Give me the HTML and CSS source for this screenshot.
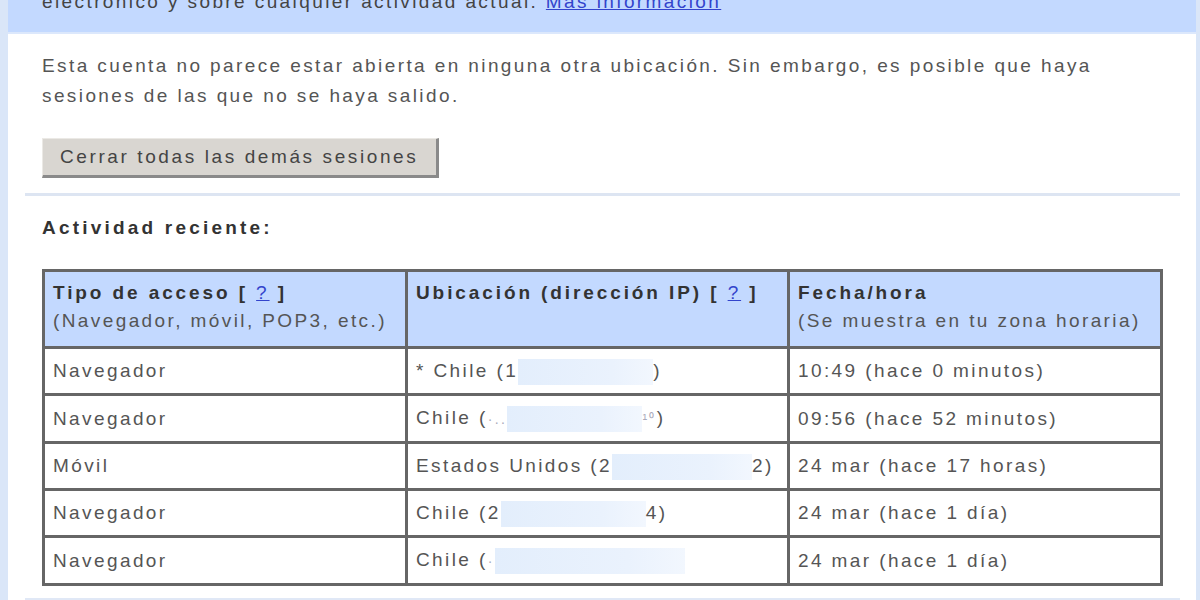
FILE: index.html
```html
<!DOCTYPE html>
<html>
<head>
    <meta charset="UTF-8">
    <title>Actividad de la cuenta</title>
    <link rel="stylesheet" href="styles.css">
</head>
<body>
    <div class="page">
        <div class="banner">
            <div class="banner-text">
                electrónico y sobre cualquier actividad actual. <a href="#">Más información</a>
            </div>
        </div>

        <div class="section">
            <p class="intro">
                Esta cuenta no parece estar abierta en ninguna otra ubicación. Sin embargo, es posible que haya<br>
                sesiones de las que no se haya salido.
            </p>
            <button class="close-btn">Cerrar todas las demás sesiones</button>
        </div>

        <div class="separator"></div>

        <div class="section activity">
            <h3 class="activity-title">Actividad reciente:</h3>

            <table class="activity-table">
                <tr class="head">
                    <th class="col-type"><b>Tipo de acceso [ <a href="#">?</a> ]</b><span>(Navegador, móvil, POP3, etc.)</span></th>
                    <th class="col-loc"><b>Ubicación (dirección IP) [ <a href="#">?</a> ]</b></th>
                    <th class="col-date"><b>Fecha/hora</b><span>(Se muestra en tu zona horaria)</span></th>
                </tr>
                <tr>
                    <td>Navegador</td>
                    <td>* Chile (1<span class="blur w135"></span>)</td>
                    <td>10:49 (hace 0 minutos)</td>
                </tr>
                <tr>
                    <td>Navegador</td>
                    <td>Chile (<span class="faint">·..</span><span class="blur w135"></span><span class="faint">¹⁰</span>)</td>
                    <td>09:56 (hace 52 minutos)</td>
                </tr>
                <tr>
                    <td>Móvil</td>
                    <td>Estados Unidos (2<span class="blur w140"></span>2)</td>
                    <td>24 mar (hace 17 horas)</td>
                </tr>
                <tr>
                    <td>Navegador</td>
                    <td>Chile (2<span class="blur w145"></span>4)</td>
                    <td>24 mar (hace 1 día)</td>
                </tr>
                <tr>
                    <td>Navegador</td>
                    <td>Chile (<span class="faint">·</span><span class="blur w190"></span></td>
                    <td>24 mar (hace 1 día)</td>
                </tr>
            </table>
        </div>

        <div class="separator bottom"></div>
    </div>
</body>
</html>
```

FILE: styles.css
```css
* {
    margin: 0;
    padding: 0;
    box-sizing: border-box;
}

body {
    background-color: #dae6f8;
    font-family: "Liberation Sans", Arial, sans-serif;
    font-size: 19px;
    letter-spacing: 2.4px;
    color: #555;
    height: 600px;
    overflow: hidden;
}

.page {
    margin: 0 4px 0 8px;
    height: 600px;
    background-color: #fff;
}

.banner {
    height: 34px;
    background-color: #c3d9ff;
    border-bottom: 2px solid #dce8fc;
    padding: 0 34px;
    overflow: hidden;
}

.banner-text {
    margin-top: -13px;
    line-height: 30px;
    color: #444;
    white-space: nowrap;
}

.banner-text a {
    color: #3344cc;
}

.section {
    padding: 17px 34px 0 34px;
}

.intro {
    line-height: 30px;
    color: #555;
    white-space: nowrap;
}

.close-btn {
    margin-top: 27px;
    width: 397px;
    height: 40px;
    font-family: inherit;
    font-size: 19px;
    letter-spacing: 2.6px;
    color: #444;
    background-color: #d9d6d1;
    border-top: 1px solid #ebe9e5;
    border-left: 1px solid #ebe9e5;
    border-right: 3px solid #8a8a8a;
    border-bottom: 3px solid #8a8a8a;
    text-align: left;
    padding-left: 17px;
}

.separator {
    margin: 15px 16px 0 17px;
    height: 3px;
    background-color: #dde5f2;
}

.activity {
    padding-top: 17px;
}

.activity-title {
    font-size: 19px;
    font-weight: bold;
    letter-spacing: 3.2px;
    line-height: 30px;
    color: #333;
}

.activity-table {
    margin-top: 26px;
    width: 1121px;
    border-collapse: collapse;
    border: 3px solid #5e5e5e;
}

.activity-table th,
.activity-table td {
    border: 3px solid #666;
    text-align: left;
    vertical-align: top;
}

.activity-table th {
    background-color: #c3d9ff;
    font-weight: normal;
    height: 77px;
    padding: 7px 8px 0 8px;
    line-height: 28px;
    color: #555;
}

.activity-table th b {
    display: block;
    color: #333;
    letter-spacing: 2.9px;
}

.activity-table th span {
    display: block;
}

.activity-table th a {
    color: #3344cc;
    font-weight: normal;
}

.col-type {
    width: 363px;
}

.col-loc {
    width: 382px;
}

.activity-table td {
    height: 47px;
    padding: 0 8px;
    line-height: 44px;
    vertical-align: middle;
    color: #555;
    white-space: nowrap;
}

.blur {
    display: inline-block;
    height: 26px;
    vertical-align: middle;
    background: linear-gradient(90deg, #e3eefc, #eaf2fd 70%, #f2f7fe);
}

.w135 {
    width: 135px;
}

.w140 {
    width: 140px;
}

.w145 {
    width: 145px;
}

.w190 {
    width: 190px;
}

.faint {
    color: #aab;
    font-size: 14px;
}

.separator.bottom {
    margin-top: 12px;
    height: 4px;
    background-color: #e0e8f6;
}
```
